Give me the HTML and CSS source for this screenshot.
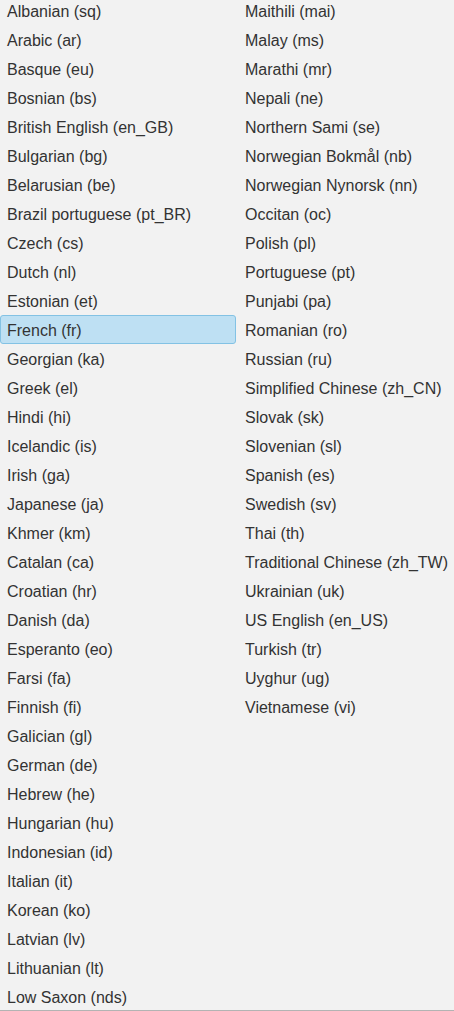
FILE: index.html
```html
<!DOCTYPE html>
<html>
<head>
<meta charset="utf-8">
<link rel="stylesheet" href="styles.css">
</head>
<body>
<div class="viewport">
  <div class="lists">
    <ul class="col col-left">
      <li class="item">Albanian (sq)</li>
      <li class="item">Arabic (ar)</li>
      <li class="item">Basque (eu)</li>
      <li class="item">Bosnian (bs)</li>
      <li class="item">British English (en_GB)</li>
      <li class="item">Bulgarian (bg)</li>
      <li class="item">Belarusian (be)</li>
      <li class="item">Brazil portuguese (pt_BR)</li>
      <li class="item">Czech (cs)</li>
      <li class="item">Dutch (nl)</li>
      <li class="item">Estonian (et)</li>
      <li class="item selected">French (fr)</li>
      <li class="item">Georgian (ka)</li>
      <li class="item">Greek (el)</li>
      <li class="item">Hindi (hi)</li>
      <li class="item">Icelandic (is)</li>
      <li class="item">Irish (ga)</li>
      <li class="item">Japanese (ja)</li>
      <li class="item">Khmer (km)</li>
      <li class="item">Catalan (ca)</li>
      <li class="item">Croatian (hr)</li>
      <li class="item">Danish (da)</li>
      <li class="item">Esperanto (eo)</li>
      <li class="item">Farsi (fa)</li>
      <li class="item">Finnish (fi)</li>
      <li class="item">Galician (gl)</li>
      <li class="item">German (de)</li>
      <li class="item">Hebrew (he)</li>
      <li class="item">Hungarian (hu)</li>
      <li class="item">Indonesian (id)</li>
      <li class="item">Italian (it)</li>
      <li class="item">Korean (ko)</li>
      <li class="item">Latvian (lv)</li>
      <li class="item">Lithuanian (lt)</li>
      <li class="item">Low Saxon (nds)</li>
    </ul>
    <ul class="col col-right">
      <li class="item">Maithili (mai)</li>
      <li class="item">Malay (ms)</li>
      <li class="item">Marathi (mr)</li>
      <li class="item">Nepali (ne)</li>
      <li class="item">Northern Sami (se)</li>
      <li class="item">Norwegian Bokmål (nb)</li>
      <li class="item">Norwegian Nynorsk (nn)</li>
      <li class="item">Occitan (oc)</li>
      <li class="item">Polish (pl)</li>
      <li class="item">Portuguese (pt)</li>
      <li class="item">Punjabi (pa)</li>
      <li class="item">Romanian (ro)</li>
      <li class="item">Russian (ru)</li>
      <li class="item">Simplified Chinese (zh_CN)</li>
      <li class="item">Slovak (sk)</li>
      <li class="item">Slovenian (sl)</li>
      <li class="item">Spanish (es)</li>
      <li class="item">Swedish (sv)</li>
      <li class="item">Thai (th)</li>
      <li class="item">Traditional Chinese (zh_TW)</li>
      <li class="item">Ukrainian (uk)</li>
      <li class="item">US English (en_US)</li>
      <li class="item">Turkish (tr)</li>
      <li class="item">Uyghur (ug)</li>
      <li class="item">Vietnamese (vi)</li>
    </ul>
  </div>
</div>
</body>
</html>
```

FILE: styles.css
```css
html, body {
  margin: 0;
  padding: 0;
  background: #f2f2f2;
}

body {
  font-family: "Liberation Sans", Arial, sans-serif;
  font-size: 16px;
  color: #333333;
}

.viewport {
  height: 1010px;
  overflow: hidden;
  border-bottom: 1px solid #b3b3b3;
}

.lists {
  display: flex;
  margin-top: -4px;
}

.col {
  list-style: none;
  margin: 0;
  padding: 0;
  display: flex;
  flex-direction: column;
}

.col-left {
  width: 238px;
  flex-shrink: 0;
}

.col-right {
  flex: 1;
  min-width: 0;
}

.item {
  height: 29px;
  box-sizing: border-box;
  display: flex;
  align-items: center;
  padding: 2px 6px 0;
  border: 1px solid transparent;
  border-radius: 3px;
  white-space: nowrap;
}

.col-left .item {
  margin-right: 2px;
}

.col-right .item {
  padding-left: 6px;
}

.item.selected {
  background: #bee0f3;
  border-color: #83c2e4;
}
```
